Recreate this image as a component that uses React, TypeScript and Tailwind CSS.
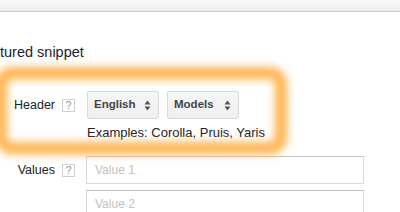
import React from "react";

function Help() {
  return (
    <span className="flex h-[13px] w-[13px] items-center justify-center border border-[#d0d0d0] bg-white text-[11px] leading-none text-[#999]">
      ?
    </span>
  );
}

function UpDown() {
  return (
    <svg width="7" height="11" viewBox="0 0 7 11" className="block">
      <path d="M0.5 4.5 L3.5 0.5 L6.5 4.5 Z" fill="#555" />
      <path d="M0.5 6.5 L3.5 10.5 L6.5 6.5 Z" fill="#555" />
    </svg>
  );
}

function Select({ label }: { label: string }) {
  return (
    <div className="flex h-[28px] w-[72px] items-center justify-between rounded-[2px] border border-[#dadada] bg-gradient-to-b from-[#f6f6f6] to-[#efefef] pl-[6px] pr-[7px]">
      <span className="text-[11.5px] font-bold text-[#444]">{label}</span>
      <UpDown />
    </div>
  );
}

function Input({ placeholder }: { placeholder: string }) {
  return (
    <div className="flex h-[28px] w-[278px] items-center border border-[#d9d9d9] border-t-[#c4c4c4] bg-white pl-[8px] text-[12px] text-[#c2c2c2]">
      {placeholder}
    </div>
  );
}

export default function App() {
  return (
    <div className="relative h-[212px] w-[400px] overflow-hidden bg-white font-['Liberation_Sans',Arial,sans-serif] text-[#222]">
      <div className="h-[12px] border-b border-[#c9c9c9] bg-gradient-to-b from-[#fbfbfb] to-[#ededed]" />
      <div className="mt-[31px] text-[14.5px] leading-[18px] text-[#222]">tured snippet</div>

      <div className="mt-[30px] flex items-center">
        <div className="w-[55px] text-right text-[12.5px] leading-[16px]">Header</div>
        <div className="ml-[7px]">
          <Help />
        </div>
        <div className="ml-[12px] flex gap-[8px]">
          <Select label="English" />
          <Select label="Models" />
        </div>
      </div>
      <div className="ml-[87px] mt-[6px] text-[13px] leading-[16px]">Examples: Corolla, Pruis, Yaris</div>

      <div className="mt-[15px] flex items-center">
        <div className="w-[55px] text-right text-[12.5px] leading-[16px]">Values</div>
        <div className="ml-[7px]">
          <Help />
        </div>
        <div className="ml-[11px]">
          <Input placeholder="Value 1" />
        </div>
      </div>
      <div className="ml-[86px] mt-[6px]">
        <Input placeholder="Value 2" />
      </div>

      <div className="pointer-events-none absolute left-[-5px] top-[67px] h-[87px] w-[292px] rounded-[17px] border-[12px] border-[#ffb24a] blur-[4px]" />
    </div>
  );
}
